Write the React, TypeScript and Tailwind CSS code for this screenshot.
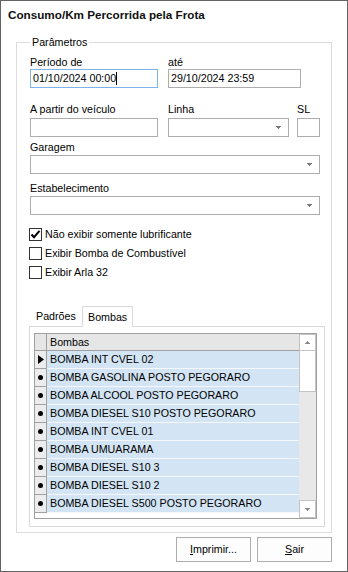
import React from "react";

const bombas = [
  "BOMBA INT CVEL 02",
  "BOMBA GASOLINA POSTO PEGORARO",
  "BOMBA ALCOOL POSTO PEGORARO",
  "BOMBA DIESEL S10 POSTO PEGORARO",
  "BOMBA INT CVEL 01",
  "BOMBA UMUARAMA",
  "BOMBA DIESEL S10 3",
  "BOMBA DIESEL S10 2",
  "BOMBA DIESEL S500 POSTO PEGORARO",
];

function DropArrow() {
  return (
    <svg width="5" height="3" viewBox="0 0 5 3" shapeRendering="crispEdges">
      <rect x="0" y="0" width="5" height="1" fill="#7a7a7a" />
      <rect x="1" y="1" width="3" height="1" fill="#7a7a7a" />
      <rect x="2" y="2" width="1" height="1" fill="#7a7a7a" />
    </svg>
  );
}

function Combo({ className }: { className: string }) {
  return (
    <div className={`${className} h-[19px] border border-[#adadad] bg-white flex items-center justify-end pr-[7px]`}>
      <DropArrow />
    </div>
  );
}

function CheckRow({ label, checked }: { label: string; checked?: boolean }) {
  return (
    <div className="h-[19px] flex items-center ml-[-1px]">
      <div className="w-[13px] h-[13px] border border-[#333333] bg-white flex items-center justify-center">
        {checked && (
          <svg width="11" height="11" viewBox="0 0 11 11">
            <path d="M1.5 5.5L4 8.2L9.5 1.8" fill="none" stroke="#000" strokeWidth="2" />
          </svg>
        )}
      </div>
      <span className="ml-[3px]">{label}</span>
    </div>
  );
}

function ScrollArrow({ up }: { up?: boolean }) {
  return (
    <svg width="7" height="4" viewBox="0 0 7 4" shapeRendering="crispEdges">
      {up ? (
        <>
          <rect x="3" y="0" width="1" height="1" fill="#8a8a8a" />
          <rect x="2" y="1" width="3" height="1" fill="#8a8a8a" />
          <rect x="1" y="2" width="5" height="1" fill="#8a8a8a" />
        </>
      ) : (
        <>
          <rect x="1" y="1" width="5" height="1" fill="#8a8a8a" />
          <rect x="2" y="2" width="3" height="1" fill="#8a8a8a" />
          <rect x="3" y="3" width="1" height="1" fill="#8a8a8a" />
        </>
      )}
    </svg>
  );
}

export default function App() {
  return (
    <div className="w-[348px] h-[572px] border border-[#646464] bg-white flex flex-col font-['Liberation_Sans',Arial,sans-serif] text-[10.7px] text-black">
      <div className="pl-[7px] pt-[7px] leading-[14px] font-bold text-[11.7px] text-[#111]">
        Consumo/Km Percorrida pela Frota
      </div>

      <fieldset className="mt-[13px] ml-[15px] w-[316px] border border-[#dcdcdc] pb-[5px]">
        <legend className="ml-[13px] px-[2px] leading-[14px]">Parâmetros</legend>

        <div className="pl-[13px] flex flex-col">
          <div className="mt-[7px] flex gap-[10px]">
            <div className="flex flex-col w-[128px]">
              <span className="leading-[12px]">Período de</span>
              <div className="mt-[1px] h-[19px] border border-[#7eb4ea] bg-white flex items-center pl-[2px]">
                <span>01/10/2024 00:00</span>
                <span className="w-[1px] h-[13px] bg-black" />
              </div>
            </div>
            <div className="flex flex-col w-[133px]">
              <span className="leading-[12px]">até</span>
              <div className="mt-[1px] h-[19px] border border-[#adadad] bg-white flex items-center pl-[2px]">
                29/10/2024 23:59
              </div>
            </div>
          </div>

          <div className="mt-[15px] flex">
            <div className="flex flex-col w-[128px]">
              <span className="leading-[12px]">A partir do veículo</span>
              <div className="mt-[3px] h-[19px] border border-[#adadad] bg-white" />
            </div>
            <div className="ml-[10px] flex flex-col w-[121px]">
              <span className="leading-[12px]">Linha</span>
              <Combo className="mt-[3px] w-[121px]" />
            </div>
            <div className="ml-[8px] flex flex-col w-[23px]">
              <span className="leading-[12px]">SL</span>
              <div className="mt-[3px] h-[19px] border border-[#adadad] bg-white" />
            </div>
          </div>

          <span className="mt-[4px] leading-[12px]">Garagem</span>
          <Combo className="mt-[2px] w-[290px]" />

          <span className="mt-[8px] leading-[12px]">Estabelecimento</span>
          <Combo className="mt-[2px] w-[290px]" />

          <div className="mt-[10px] flex flex-col">
            <CheckRow label="Não exibir somente lubrificante" checked />
            <CheckRow label="Exibir Bomba de Combustível" />
            <CheckRow label="Exibir Arla 32" />
          </div>

          <div className="mt-[24px] ml-[-1px] h-[20px] flex items-end">
            <div className="w-[53px] h-[19px] pl-[7px] flex items-center">Padrões</div>
            <div className="relative w-[51px] h-[21px] mb-[-1px] border border-b-0 border-[#d9d9d9] bg-white pl-[5px] flex items-center">
              Bombas
            </div>
          </div>

          <div className="ml-[-1px] w-[296px] h-[201px] border border-[#d9d9d9] pt-[6px] pl-[4px]">
            <div className="w-[283px] h-[186px] border border-[#a0a0a0] bg-white flex">
              <div className="w-[264px] flex flex-col">
                <div className="h-[17px] flex border-b border-[#a0a0a0] bg-[#e6e6e6]">
                  <div className="w-[12px] border-r border-[#a0a0a0]" />
                  <div className="pl-[3px] flex items-center leading-[12px]">Bombas</div>
                </div>
                {bombas.map((b, i) => (
                  <div key={b} className="h-[18px] flex">
                    <div className="w-[12px] border-r border-b border-[#a0a0a0] bg-[#ececec] flex items-center justify-center">
                      {i === 0 ? (
                        <svg width="6" height="9" viewBox="0 0 6 9">
                          <path d="M0 0L6 4.5L0 9z" fill="#000" />
                        </svg>
                      ) : (
                        <span className="w-[5px] h-[5px] rounded-full bg-black" />
                      )}
                    </div>
                    <div className="flex-1 border-b border-[#f4f8fc] bg-[#d3e5f4] pl-[3px] flex items-center">
                      {b}
                    </div>
                  </div>
                ))}
              </div>
              <div className="w-[17px] flex flex-col bg-[#e8e8e8]">
                <div className="h-[17px] border border-[#c4c4c4] bg-white flex items-center justify-center">
                  <ScrollArrow up />
                </div>
                <div className="h-[41px] border border-t-0 border-[#c4c4c4] bg-white" />
                <div className="flex-1" />
                <div className="h-[18px] border border-[#c4c4c4] bg-white flex items-center justify-center">
                  <ScrollArrow />
                </div>
              </div>
            </div>
          </div>
        </div>
      </fieldset>

      <div className="mt-[4px] pr-[15px] flex justify-end gap-[6px]">
        <button className="w-[75px] h-[25px] border border-[#adadad] bg-[#fdfdfd] text-[10.7px]">
          <span className="underline">I</span>mprimir...
        </button>
        <button className="w-[75px] h-[25px] border border-[#adadad] bg-[#fdfdfd] text-[10.7px]">
          <span className="underline">S</span>air
        </button>
      </div>
    </div>
  );
}
